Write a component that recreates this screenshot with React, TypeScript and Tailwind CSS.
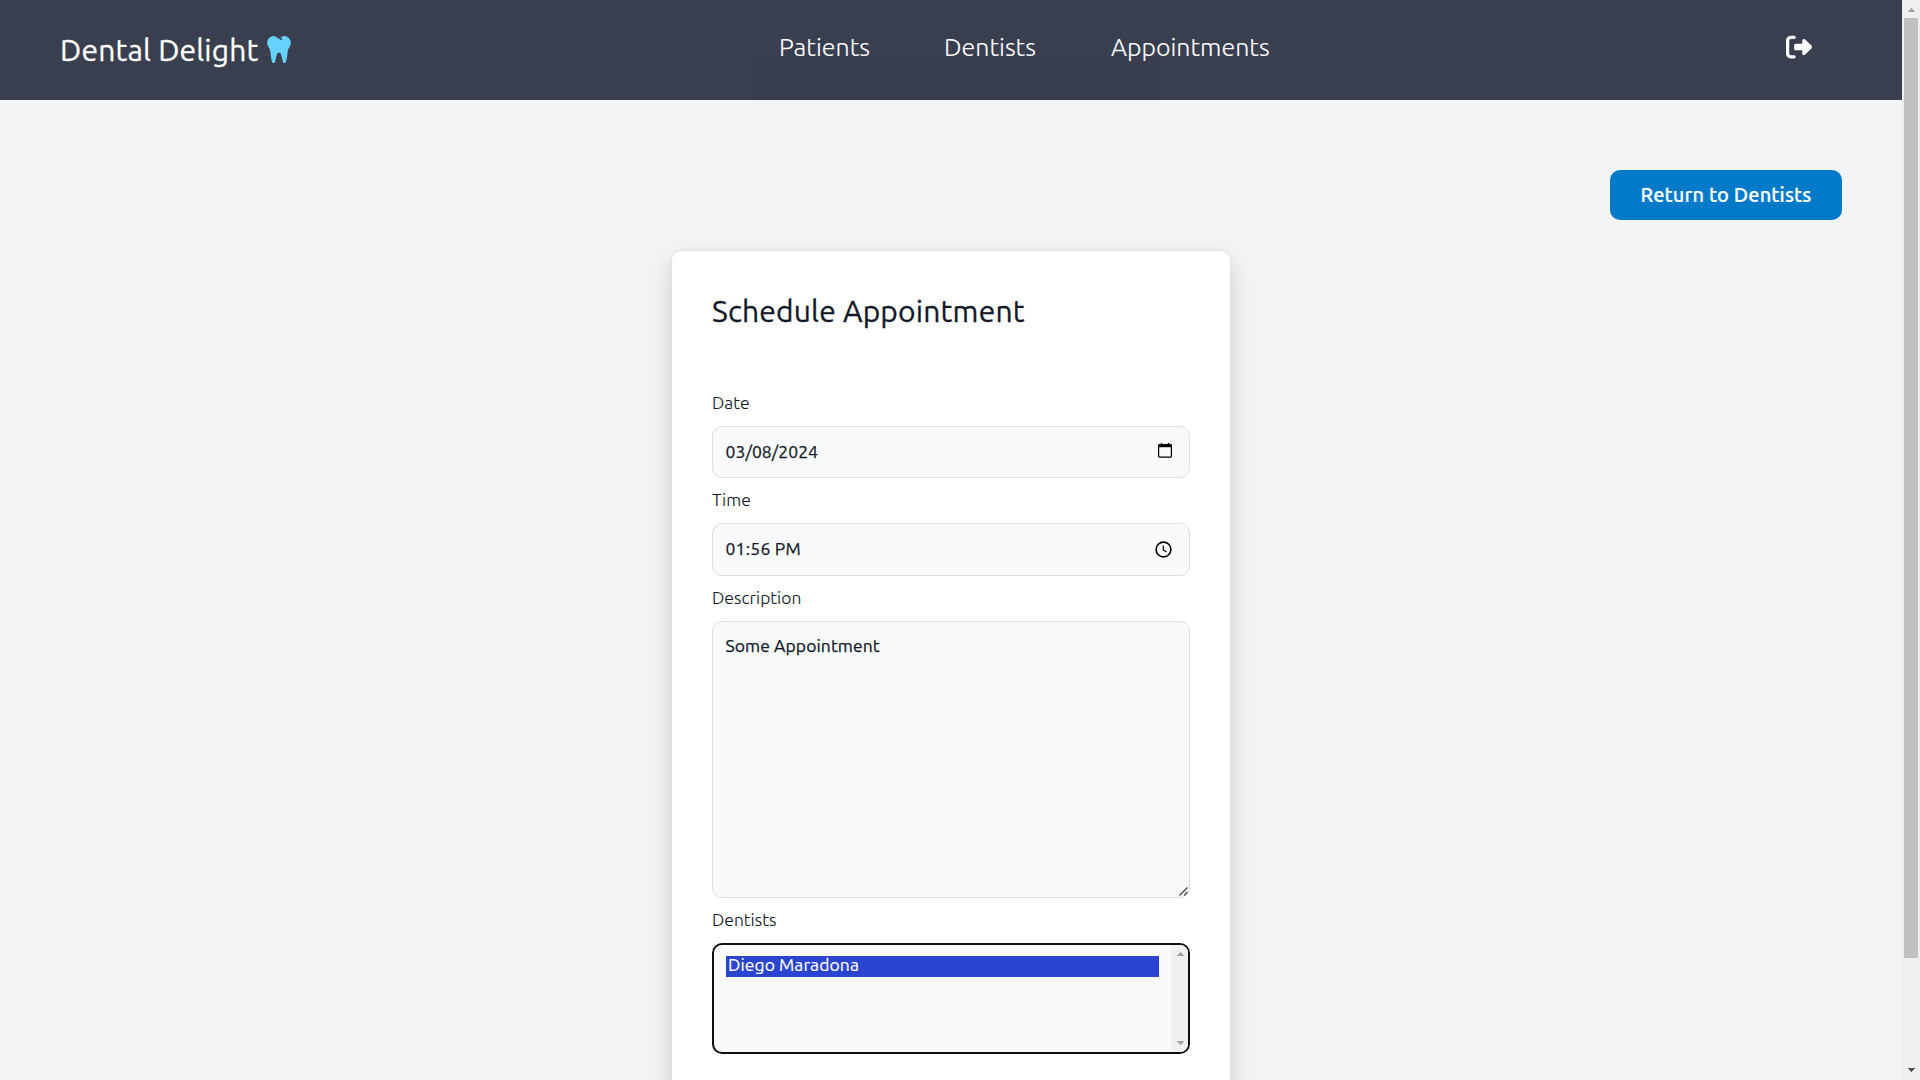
import type { ReactNode } from "react";
import { FaTooth } from "react-icons/fa";
import { FaRightFromBracket } from "react-icons/fa6";

function Label({ children }: { children: ReactNode }) {
  return (
    <div className="h-[45px] pt-[9px] text-[17.5px] leading-[25px] font-light tracking-[0.03px] text-[#111827] [-webkit-text-stroke:0.1px]">
      {children}
    </div>
  );
}

function CalendarIcon() {
  return (
    <svg className="-mt-[3px] h-[15px] w-[14px]" viewBox="0 0 14 15" fill="none">
      <path d="M3.5 0v2M10.5 0v2" stroke="#000" strokeWidth="1.4" />
      <rect x=".6" y="1.6" width="12.8" height="12.6" rx="1" stroke="#000" strokeWidth="1.2" />
      <path d="M0 1.6h14v2.6H0z" fill="#000" />
    </svg>
  );
}

function ClockIcon() {
  return (
    <svg className="h-[17px] w-[17px]" viewBox="0 0 17 17" fill="none" stroke="#000">
      <circle cx="8.5" cy="8.5" r="7.4" strokeWidth="1.6" />
      <path d="M8.3 4.4v4.5l3.3 2.1" strokeWidth="1.2" />
    </svg>
  );
}

function Scrollbar() {
  return (
    <div className="flex h-full w-[18px] shrink-0 flex-col items-center bg-[#f0f0f0]">
      <svg className="h-[18px] w-[18px] shrink-0" viewBox="0 0 18 18" shapeRendering="crispEdges">
        <path d="M9 8l4 4H5z" fill="#a3a3a3" />
      </svg>
      <div className="h-[940px] w-[14px] bg-[#c1c1c1]" />
      <div className="flex-1" />
      <svg className="h-[18px] w-[18px] shrink-0" viewBox="0 0 18 18" shapeRendering="crispEdges">
        <path d="M5 6h8l-4 4z" fill="#505050" />
      </svg>
    </div>
  );
}

/* Browser full-screen hint at the end of its fade-out. */
function FullScreenHint() {
  return (
    <div className="pointer-events-none absolute top-[55px] left-[757px] flex h-[66px] w-[404px] items-center justify-center gap-[9px] bg-black/[0.004] text-[20px] text-[#384151]">
      <span>Press</span>
      <span className="flex h-[44px] w-[52px] items-center justify-center border border-white/[0.02]">F11</span>
      <span>to exit full screen</span>
    </div>
  );
}

export default function App() {
  return (
    <div className="relative flex h-[1080px] w-[1920px] overflow-hidden bg-[#f3f4f6] font-['Ubuntu','Noto_Sans',sans-serif] text-[#111827]">
      <div className="h-full flex-1 overflow-hidden">
        <header className="flex h-[100px] items-start justify-between border-b border-[#373a50] bg-[#3a3f50] pl-[60px] pr-[90px] text-white">
          <div className="flex w-[719px] items-center gap-[8px] pt-[29px]">
            <span className="text-[30px] leading-[42px] tracking-[0.2px] whitespace-nowrap [-webkit-text-stroke:0.3px]">
              Dental Delight
            </span>
            <FaTooth className="-mt-[2px] h-[27px] w-[24px] text-[#66d0ff]" />
          </div>
          <nav className="flex flex-1 pt-[29px] text-[25px] leading-[36px] font-light [-webkit-text-stroke:0.1px]">
            <a className="w-[165px]">Patients</a>
            <a className="w-[167px]">Dentists</a>
            <a className="w-[170px]">Appointments</a>
          </nav>
          <FaRightFromBracket className="mt-[34px] h-[26px] w-[26px]" />
        </header>

        <div className="flex h-[150px] justify-end pt-[70px] pr-[60px]">
          <button className="h-[50px] w-[232px] rounded-[10px] bg-[#007ac9] text-[20px] font-medium tracking-[0.12px] text-white [-webkit-text-stroke:0.2px]">
            Return to Dentists
          </button>
        </div>

        <main className="mx-auto h-[900px] w-[560px] rounded-[10px] border border-[#dfe2e7] bg-white px-[40px] pt-[38px] shadow-[0_10px_25px_rgba(0,0,0,0.16)]">
          <h1 className="h-[92px] text-[30px] leading-[44px] tracking-[0.18px] [-webkit-text-stroke:0.3px]">
            Schedule Appointment
          </h1>

          <Label>Date</Label>
          <div className="flex h-[52px] items-center justify-between rounded-[10px] border border-[#dcdfe4] bg-[#f9fafb] pr-[17px] pl-[12.5px]">
            <span className="text-[17.5px] tracking-[0.07px] [-webkit-text-stroke:0.25px]">03/08/2024</span>
            <CalendarIcon />
          </div>

          <Label>Time</Label>
          <div className="flex h-[53px] items-center justify-between rounded-[10px] border border-[#dcdfe4] bg-[#f9fafb] pr-[17px] pl-[12.5px]">
            <span className="text-[17.5px] tracking-[0.25px] [-webkit-text-stroke:0.25px]">01:56 PM</span>
            <ClockIcon />
          </div>

          <Label>Description</Label>
          <div className="flex h-[277px] items-start justify-between rounded-[10px] border border-[#dcdfe4] bg-[#f9fafb] pr-[1px] pl-[12.5px]">
            <span className="pt-[11px] text-[17.5px] leading-[26px] tracking-[0.08px] [-webkit-text-stroke:0.25px]">
              Some Appointment
            </span>
            <svg className="mb-px h-[9px] w-[9px] self-end" viewBox="0 0 9 9" stroke="#555" strokeWidth="1.5">
              <path d="M.5 8.5l8-8M5 8.5l3.5-3.5" />
            </svg>
          </div>

          <Label>Dentists</Label>
          <div className="flex h-[111px] overflow-hidden rounded-[10px] border-2 border-[#101010] bg-[#f9fafb] pl-[12px]">
            <div className="mt-[11px] mr-[12px] h-[21px] flex-1 bg-[#2b45d0] pl-[2px] text-[17.5px] leading-[18px] tracking-[0.08px] text-white [-webkit-text-stroke:0.15px]">
              Diego Maradona
            </div>
            <div className="flex h-full w-[17px] flex-col items-center justify-between bg-[#f0f0f0] py-[7px]">
              <svg className="h-[4px] w-[8px]" viewBox="0 0 8 4" shapeRendering="crispEdges">
                <path d="M4 0l4 4H0z" fill="#a3a3a3" />
              </svg>
              <svg className="h-[4px] w-[8px]" viewBox="0 0 8 4" shapeRendering="crispEdges">
                <path d="M0 0h8L4 4z" fill="#a3a3a3" />
              </svg>
            </div>
          </div>
        </main>
      </div>
      <Scrollbar />
      <FullScreenHint />
    </div>
  );
}
